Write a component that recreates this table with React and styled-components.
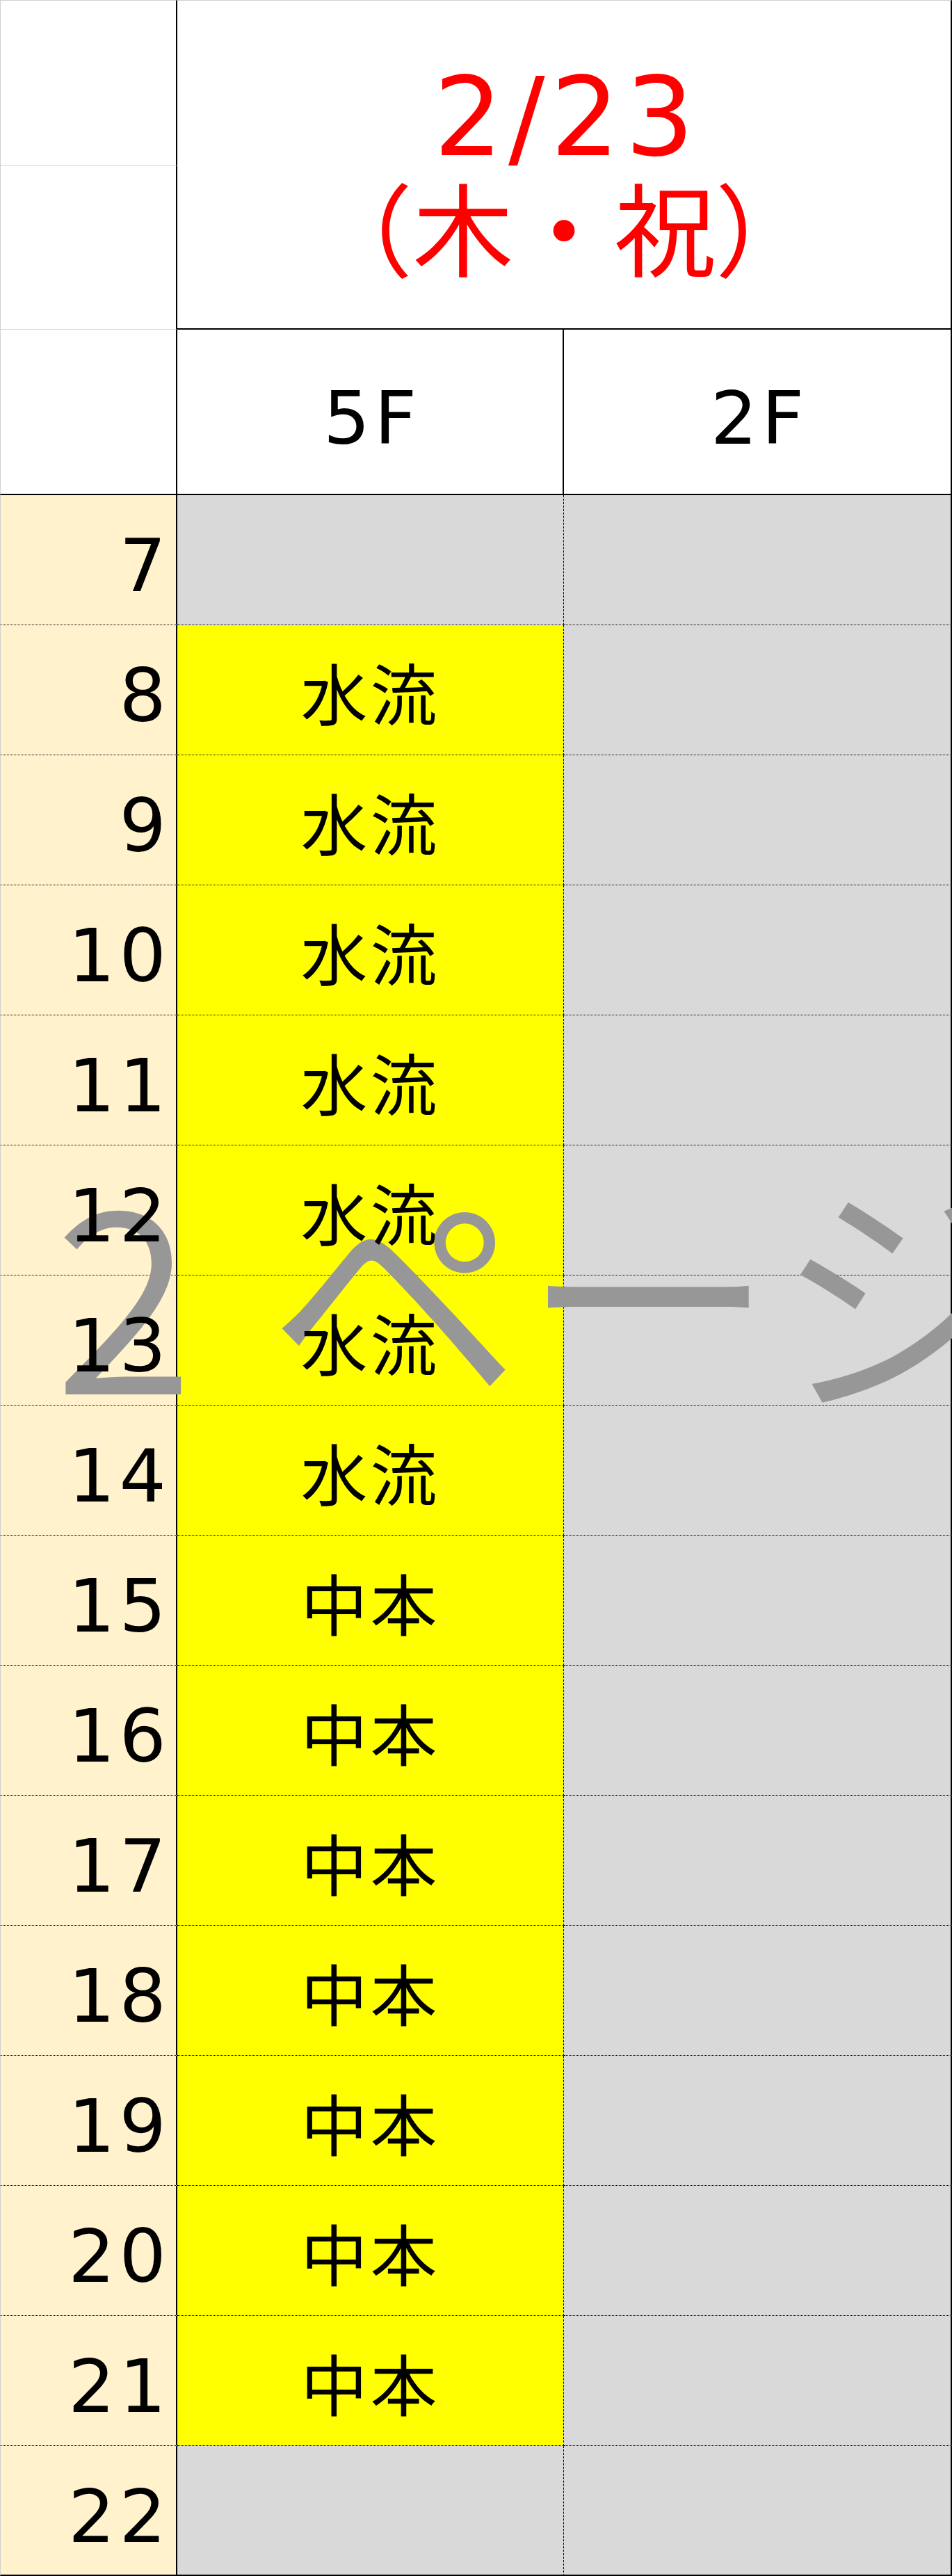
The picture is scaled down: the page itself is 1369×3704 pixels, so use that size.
import styled, { createGlobalStyle } from "styled-components";

const GlobalStyle = createGlobalStyle`
  html, body {
    margin: 0;
    padding: 0;
    background: #ffffff;
  }
  body {
    font-family: "DejaVu Sans", "Noto Sans CJK JP", sans-serif;
  }
`;

const HOURS = Array.from({ length: 16 }, (_, i) => i + 7);

const slotFor = (h) => {
  if (h >= 8 && h <= 14) return "水流";
  if (h >= 15 && h <= 21) return "中本";
  return "";
};

function App() {
  return (
    <>
      <GlobalStyle />
      <Page>
        <Sheet>
          <CornerCell $top />
          <TitleCell>
            <DateLine>2/23</DateLine>
            <DayLine>
              <Paren $side="open">（</Paren>木・祝<Paren $side="close">）</Paren>
            </DayLine>
          </TitleCell>
          <CornerCell />
          <CornerCell $closing />
          <FloorCell>
            <Label>5F</Label>
          </FloorCell>
          <FloorCell>
            <Label>2F</Label>
          </FloorCell>
          {HOURS.map((h, i) => {
            const last = i === HOURS.length - 1;
            const who = slotFor(h);
            return [
              <HourCell key={`h${h}`} $last={last}>
                <Label>{h}</Label>
              </HourCell>,
              <SlotCell key={`b${h}`} $last={last} $booked={!!who}>
                <Name>{who}</Name>
              </SlotCell>,
              <SlotCell key={`c${h}`} $last={last} $edge />,
            ];
          })}
        </Sheet>
        <Watermark>
          <Glyph $w={307} $align="left">2</Glyph>
          <Glyph $w={365}>ペ</Glyph>
          <Glyph $w={365}>ー</Glyph>
          <Glyph $w={365}>ジ</Glyph>
        </Watermark>
      </Page>
    </>
  );
}

export default App;

const Page = styled.div`
  position: relative;
  width: 1369px;
  height: 3704px;
  overflow: hidden;
  background: #ffffff;
`;

const Sheet = styled.div`
  display: grid;
  grid-template-columns: 255px 556px 558px;
  grid-template-rows: 238px 236px 238px repeat(16, 187px);
  box-sizing: border-box;
`;

const Cell = styled.div`
  box-sizing: border-box;
  display: flex;
  align-items: center;
  min-width: 0;
`;

const CornerCell = styled(Cell)`
  background: #ffffff;
  border-left: 1px solid #d0d0d0;
  border-top: ${(p) => (p.$top ? "1px solid #d0d0d0" : "none")};
  border-right: 2px solid #000000;
  border-bottom: ${(p) => (p.$closing ? "2px solid #000000" : "1px solid #d4d4d4")};
`;

const TitleCell = styled(Cell)`
  grid-column: 2 / 4;
  grid-row: 1 / 3;
  flex-direction: column;
  justify-content: center;
  padding-top: 14px;
  background: #ffffff;
  border-top: 1px solid #d0d0d0;
  border-right: 2px solid #000000;
  border-bottom: 2px solid #000000;
  color: #ff0000;
`;

const DateLine = styled.div`
  font-family: "DejaVu Sans", sans-serif;
  font-size: 156px;
  line-height: 160px;
  letter-spacing: 8px;
  padding-left: 8px;
  white-space: nowrap;
`;

const DayLine = styled.div`
  font-family: "Noto Sans CJK JP", sans-serif;
  font-size: 145px;
  line-height: 150px;
  white-space: nowrap;
`;

const Paren = styled.span`
  margin-left: ${(p) => (p.$side === "open" ? "-0.5em" : "0")};
  margin-right: ${(p) => (p.$side === "close" ? "-0.5em" : "0")};
`;

const FloorCell = styled(Cell)`
  justify-content: center;
  padding-top: 20px;
  padding-left: 6px;
  background: #ffffff;
  border-right: 2px solid #000000;
  border-bottom: 2px solid #000000;
  font-family: "DejaVu Sans", sans-serif;
  font-size: 106px;
  letter-spacing: 6px;
  color: #000000;
`;

const HourCell = styled(Cell)`
  justify-content: flex-end;
  padding-top: 18px;
  padding-right: 8px;
  background: #fff2cc;
  border-left: 1px solid #d0d0d0;
  border-right: 2px solid #000000;
  border-bottom: ${(p) => (p.$last ? "2px solid #000000" : "1px dotted #000000")};
  font-family: "DejaVu Sans", sans-serif;
  font-size: 106px;
  letter-spacing: 6px;
  color: #000000;
`;

const SlotCell = styled(Cell)`
  justify-content: center;
  padding-top: 4px;
  background: ${(p) => (p.$booked ? "#ffff00" : "#d9d9d9")};
  border-right: ${(p) => (p.$edge ? "2px solid #000000" : "1px dashed #000000")};
  border-bottom: ${(p) => (p.$last ? "2px solid #000000" : "1px dotted #000000")};
  font-family: "Noto Sans CJK JP", sans-serif;
  font-size: 96px;
  color: #000000;
`;

const Label = styled.span`
  position: relative;
  z-index: 2;
  line-height: 1;
  white-space: nowrap;
`;

const Name = styled(Label)`
  letter-spacing: 4px;
`;

const Watermark = styled.div`
  position: absolute;
  left: 78px;
  top: 1664px;
  z-index: 1;
  display: flex;
  font-family: "Noto Sans CJK JP", sans-serif;
  font-size: 365px;
  font-weight: 350;
  line-height: 365px;
  color: #979797;
  white-space: nowrap;
  pointer-events: none;
`;

const Glyph = styled.span`
  flex: none;
  width: ${(p) => p.$w}px;
  text-align: ${(p) => p.$align || "center"};
`;
